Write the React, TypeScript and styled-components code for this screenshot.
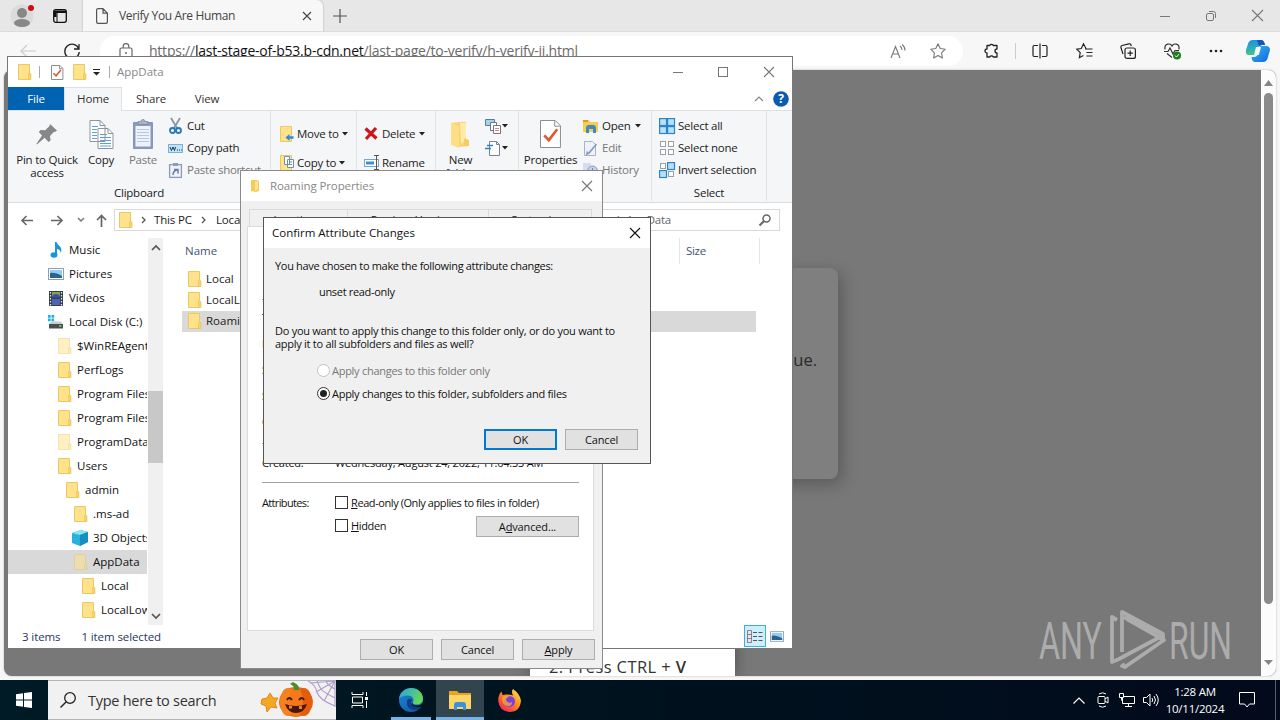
import React from 'react';
import styled, { createGlobalStyle, css } from 'styled-components';

const GlobalStyle = createGlobalStyle`
    * {
        box-sizing: border-box;
    }

    body {
        margin: 0;
        overflow: hidden;
        font-family: 'Open Sans', 'Noto Sans', sans-serif;
        font-size: 11.5px;
        color: #1a1a1a;
    }
`;

/* ---------- shared ---------- */

const Desktop = styled.div`
    position: relative;
    display: flex;
    flex-direction: column;
    width: 1280px;
    height: 720px;
    overflow: hidden;
    background: #f7f7f7;
`;

const Text = styled.span<{ $size?: number; $spacing?: number; $color?: string }>`
    flex: none;
    white-space: pre;
    line-height: 16px;
    font-size: ${({ $size }) => $size ?? 11.5}px;
    letter-spacing: ${({ $spacing }) => ($spacing === undefined ? 'inherit' : `${$spacing}px`)};
    color: ${({ $color }) => $color ?? 'inherit'};
`;

const Slot = styled.div<{ $width: number }>`
    flex: none;
    display: flex;
    align-items: center;
    justify-content: center;
    width: ${({ $width }) => $width}px;
    height: 100%;
`;

const Spacer = styled.div`
    flex: 1;
`;

const Svg = styled.svg`
    flex: none;
    display: block;
    fill: none;
    overflow: visible;
`;

type IconProps = { w: number; h: number; children: React.ReactNode };

const Icon: React.FC<IconProps> = ({ w, h, children }) => (
    <Svg width={w} height={h} viewBox={`0 0 ${w} ${h}`}>
        {children}
    </Svg>
);

const CloseIcon: React.FC<{ size?: number; color?: string }> = ({ size = 10, color = '#777' }) => (
    <Icon w={size} h={size}>
        <path d={`M0 0L${size} ${size}M${size} 0L0 ${size}`} stroke={color} strokeWidth="1.1" />
    </Icon>
);

const FolderIcon: React.FC<{ faded?: boolean }> = ({ faded }) => (
    <Icon w={13} h={16}>
        <g opacity={faded ? 0.5 : 1}>
            <path d="M.5.5h11v15H.5z" fill="#ffe28a" stroke="#e8c867" />
            <path d="M10.500 10l1-1.500L13 10v5.500h-2.500z" fill="#f8d56c" stroke="#e8c35a" strokeWidth=".7" />
        </g>
    </Icon>
);

const CaretDown = () => (
    <Icon w={6} h={4}>
        <path d="M0 0h6L3 3.500z" fill="#222" />
    </Icon>
);

/* ---------- browser ---------- */

const TabStrip = styled.div`
    flex: none;
    display: flex;
    align-items: center;
    height: 32px;
    background: #e7e7e7;
    border-bottom: 1px solid #dcdcdc;
`;

const BrowserTab = styled.div`
    display: flex;
    align-items: center;
    width: 240px;
    height: 32px;
    padding: 0 12px 0 13px;
    background: #f7f7f7;
    border-radius: 0 6px 0 0;
    box-shadow: 0 0 2px rgba(0, 0, 0, 0.3);
    clip-path: inset(0 -3px 0 -3px);
`;

const TabTitle = styled(Text)`
    flex: 1;
    margin-left: 11px;
    color: #444;
`;

const Toolbar = styled.div`
    flex: none;
    display: flex;
    align-items: center;
    height: 38px;
    background: #f7f7f7;
`;

const AddressPill = styled.div`
    display: flex;
    align-items: center;
    width: 863px;
    height: 30px;
    margin-left: 8px;
    padding-left: 19px;
    border-radius: 15px;
    background: #fff;
`;

const Url = styled(Text)`
    flex: 1;
    margin-left: 16px;
    color: #6b6b6b;

    b {
        font-weight: 400;
        color: #111;
    }
`;

const ToolbarDivider = styled.div`
    width: 1px;
    height: 16px;
    margin: 0 1px 0 1px;
    background: #ccc;
`;

const Page = styled.div`
    flex: none;
    position: relative;
    display: flex;
    width: 1272px;
    height: 606px;
    margin-left: 4px;
    border-radius: 8px;
    overflow: hidden;
    background: #787878;
    box-shadow: 0 0 2px #aaa;
`;

const PageScrollbar = styled.div`
    display: flex;
    flex-direction: column;
    align-items: center;
    justify-content: space-between;
    width: 15px;
    height: 606px;
    margin-left: auto;
    padding: 10px 0;
    background: #fcfcfc;
`;

const PageThumb = styled.div`
    width: 9px;
    height: 511px;
    margin: 7px 0 56px;
    border-radius: 5px;
    background: #8b8b8b;
`;

const VerifyCard = styled.div`
    position: absolute;
    left: 420px;
    top: 198px;
    display: flex;
    justify-content: flex-end;
    width: 414px;
    height: 211px;
    padding: 84px 21px 0;
    border-radius: 8px;
    background: #7f7f7f;
    box-shadow: 4px 5px 16px rgba(0, 0, 0, 0.25);
`;

const StepsPopup = styled.div`
    position: absolute;
    left: 526px;
    bottom: 0;
    display: flex;
    align-items: flex-end;
    width: 205px;
    height: 90px;
    padding: 0 0 1px 19px;
    background: #fff;
    box-shadow: 0 0 14px rgba(0, 0, 0, 0.35);
`;

const Watermark = styled.div`
    position: absolute;
    left: 1034px;
    top: 538px;
`;

const EdgeTabs = () => (
    <TabStrip>
        <Slot $width={44}>
            <Icon w={24} h={24}>
                <circle cx="12" cy="12" r="11.500" fill="#dbdbdb" />
                <circle cx="12" cy="9" r="5" fill="#888" />
                <ellipse cx="12" cy="19" rx="8" ry="4" fill="#888" />
                <circle cx="21" cy="4" r="3" fill="#d40b16" />
            </Icon>
        </Slot>
        <Slot $width={32}>
            <Icon w={14} h={14}>
                <rect x=".7" y=".7" width="12.600" height="12.600" rx="2" stroke="#111" strokeWidth="1.300" />
                <path d="M1 1.500h12v2.500H1zM1 4h2.500v4H1z" fill="#111" />
                <path d="M4 4v9" stroke="#111" />
            </Icon>
        </Slot>
        <Slot $width={7} />
        <BrowserTab>
            <Icon w={12} h={16}>
                <path d="M1.500.6h5.500l4.400 4.600v8.800q0 1.400-1.400 1.400H2q-1.400 0-1.400-1.400V2Q.6.6 2 .6M7 .6v4.600h4.400" stroke="#555" strokeWidth="1.200" />
            </Icon>
            <TabTitle $size={12} $spacing={-0.35}>
                Verify You Are Human
            </TabTitle>
            <CloseIcon size={8} color="#444" />
        </BrowserTab>
        <Slot $width={34}>
            <Icon w={14} h={14}>
                <path d="M7 0v14M0 7h14" stroke="#555" strokeWidth="1.200" />
            </Icon>
        </Slot>
        <Spacer />
        <Slot $width={46}>
            <Icon w={10} h={10}>
                <path d="M0 5.500h10" stroke="#777" />
            </Icon>
        </Slot>
        <Slot $width={46}>
            <Icon w={10} h={10}>
                <rect x=".5" y="2.500" width="7" height="7" rx="1.500" stroke="#777" />
                <path d="M3 .5h4.500q2 0 2 2V7" stroke="#777" />
            </Icon>
        </Slot>
        <Slot $width={46}>
            <CloseIcon size={11} />
        </Slot>
    </TabStrip>
);

const EdgeToolbar = () => (
    <Toolbar>
        <Slot $width={56}>
            <Icon w={16} h={14}>
                <path d="M16 7H1M7 1L1 7l6 6" stroke="#ccc" strokeWidth="1.200" />
            </Icon>
        </Slot>
        <Slot $width={36} style={{ paddingRight: 4 }}>
            <Icon w={16} h={16}>
                <path d="M14.800 6A7.200 7.200 0 1 0 15.200 9M15 1v5h-5" stroke="#222" strokeWidth="1.300" />
            </Icon>
        </Slot>
        <AddressPill>
            <Icon w={14} h={16}>
                <rect x="1" y="5" width="12" height="10" rx="1.500" stroke="#666" strokeWidth="1.200" />
                <path d="M4.200 5V3.500a2.800 2.800 0 0 1 5.600 0V5" stroke="#666" strokeWidth="1.200" />
                <circle cx="7" cy="10" r="1" fill="#666" />
            </Icon>
            <Url $size={14} $spacing={-0.23}>
                https://<b>last-stage-of-b53.b-cdn.net</b>/last-page/to-verify/h-verify-ii.html
            </Url>
            <Slot $width={40}>
                <Icon w={16} h={15}>
                    <path d="M1 14L5.500 2.500 10 14M2.500 10h6M10 2q2 1.500 2 4M12 .5q3 2 3 6" stroke="#777" strokeWidth="1.100" />
                </Icon>
            </Slot>
            <Slot $width={45} style={{ paddingRight: 5 }}>
                <Icon w={16} h={16}>
                    <path d="M8 .8l2.200 4.700 5 .7-3.600 3.600.8 5.200L8 12.500 3.600 15l.8-5.200L.8 6.200l5-.7z" stroke="#777" strokeWidth="1.100" strokeLinejoin="round" />
                </Icon>
            </Slot>
        </AddressPill>
        <Slot $width={51} style={{ paddingLeft: 4 }}>
            <Icon w={16} h={16}>
                <path
                    d="M4 2.500h2.700a2 2 0 0 1 3.600 0H14V6a2 2 0 0 0 0 4v4h-3.700a2 2 0 0 0-3.600 0H4v-4a2 2 0 0 1 0-4z"
                    stroke="#222"
                    strokeWidth="1.300"
                    strokeLinejoin="round"
                />
            </Icon>
        </Slot>
        <ToolbarDivider />
        <Slot $width={45}>
            <Icon w={16} h={16}>
                <path d="M6 2.500H2.200Q1 2.500 1 3.700v8.600q0 1.200 1.200 1.200H6M10 2.500h3.800q1.200 0 1.200 1.200v8.600q0 1.200-1.200 1.200H10M8 .5v15" stroke="#222" strokeWidth="1.200" />
            </Icon>
        </Slot>
        <Slot $width={44}>
            <Icon w={17} h={16}>
                <path d="M10 5.500L7.500.8 5.300 5.500.8 6.200l3.400 3.500-.8 5 4-2.200M9 6h7.500M10.500 9.500h6M10.500 13h6" stroke="#222" strokeWidth="1.200" />
            </Icon>
        </Slot>
        <Slot $width={44}>
            <Icon w={16} h={16}>
                <rect x="5" y="5" width="10.400" height="10.400" rx="2" stroke="#222" strokeWidth="1.200" />
                <path d="M10.200 7.500v5.400M7.500 10.200h5.400M3 11L.9 4.500Q.6 3 2 2.500L9 .8q1.500-.3 1.900 1l.4 1.400" stroke="#222" strokeWidth="1.200" />
            </Icon>
        </Slot>
        <Slot $width={44}>
            <Icon w={17} h={16}>
                <path d="M1 6.500C0 0 6.500 0 8 3c1.500-3 8-3 7 3.500M0 8.500h4l2-3.500 3 6 2-3.500h4M3 10.500l5 4" stroke="#333" strokeWidth="1.200" />
                <circle cx="13" cy="12.500" r="4" fill="#1d7d20" />
                <path d="M11 12.500l1.500 1.500 2.500-2.800" stroke="#fff" />
            </Icon>
        </Slot>
        <Slot $width={44}>
            <Icon w={14} h={4}>
                <circle cx="2" cy="2" r="1.300" fill="#222" />
                <circle cx="7" cy="2" r="1.300" fill="#222" />
                <circle cx="12" cy="2" r="1.300" fill="#222" />
            </Icon>
        </Slot>
        <Slot $width={40}>
            <Icon w={24} h={22}>
                <defs>
                    <linearGradient id="copA" x1="0" y1="0" x2="0" y2="1">
                        <stop offset="0" stopColor="#1d8fe8" />
                        <stop offset="1" stopColor="#3fc58c" />
                    </linearGradient>
                    <linearGradient id="copB" x1="0" y1="0" x2="1" y2="1">
                        <stop offset="0" stopColor="#35b5f4" />
                        <stop offset="1" stopColor="#1467dd" />
                    </linearGradient>
                </defs>
                <path d="M7 0h8q3 0 4 5h-3q-3 0-4 3l-2 7H3q-4 0-3-5l2-6q1-4 5-4z" fill="url(#copA)" />
                <path d="M11 0h4q3 0 4 5h-3q-2 0-3 1.500z" fill="#1656b4" />
                <path d="M17 22H9q-3 0-3.500-5H8q3 0 4-3l2-8h6q4 0 4 4l-2 7q-1 5-5 5z" fill="url(#copB)" />
                <path d="M10 7h5l-2.200 8H8z" fill="#f3fbff" />
            </Icon>
        </Slot>
    </Toolbar>
);

const AnyRunLogo = () => (
    <Icon w={194} h={66}>
        <g opacity=".8">
            <text x="1" y="51" fontFamily="Roboto" fontWeight="400" fontSize="52" fill="#b9b9b9" textLength="63" lengthAdjust="spacingAndGlyphs">
                ANY
            </text>
            <text x="131" y="51" fontFamily="Roboto" fontWeight="400" fontSize="52" fill="#b9b9b9" textLength="63" lengthAdjust="spacingAndGlyphs">
                RUN
            </text>
            <path
                d="M79 12l-5-3v45l7-3 41-22-36-20M84 44V4l41 22v4M87 56l-3 2 3 1 39-27-37-21"
                stroke="#b9b9b9"
                strokeWidth="3.800"
                strokeLinejoin="round"
            />
        </g>
    </Icon>
);

const PageContent = () => (
    <Page>
        <PageScrollbar>
            <Icon w={9} h={6}>
                <path d="M0 6L4.500 0 9 6z" fill="#858585" />
            </Icon>
            <PageThumb />
            <Icon w={9} h={6}>
                <path d="M0 0l4.500 5L9 0z" fill="#858585" />
            </Icon>
        </PageScrollbar>
        <VerifyCard>
            <Text $size={16.500} $color="#2a2a2a">
                Click to continue.
            </Text>
        </VerifyCard>
        <StepsPopup>
            <Text $size={16.500} $spacing={0.4} $color="#333">
                2. Press CTRL + <b style={{ fontWeight: 600 }}>V</b>
            </Text>
        </StepsPopup>
        <Watermark>
            <AnyRunLogo />
        </Watermark>
    </Page>
);

/* ---------- windows ---------- */

const Window = styled.section<{ $x: number; $y: number; $w: number; $h: number; $border: string }>`
    position: absolute;
    left: ${({ $x }) => $x}px;
    top: ${({ $y }) => $y}px;
    display: flex;
    flex-direction: column;
    width: ${({ $w }) => $w}px;
    height: ${({ $h }) => $h}px;
    border: 1px solid ${({ $border }) => $border};
    background: #fff;
    overflow: hidden;
`;

const TitleBar = styled.header`
    flex: none;
    display: flex;
    align-items: center;
    height: 30px;
    background: #fff;
`;

const TitleDivider = styled.div`
    width: 1px;
    height: 12px;
    background: #aaa;
`;

const QuickAccess = styled.div`
    display: flex;
    align-items: center;
    padding-left: 10px;
`;

const RibbonTabs = styled.nav`
    flex: none;
    display: flex;
    height: 24px;
    border-bottom: 1px solid #dfe0e1;
    letter-spacing: -0.15px;
`;

const RibbonTab = styled.div<{ $width: number; $kind?: 'file' | 'active' }>`
    display: flex;
    align-items: center;
    justify-content: center;
    width: ${({ $width }) => $width}px;
    color: #333;

    ${({ $kind }) =>
        $kind === 'file' &&
        css`
            background: #0063b1;
            color: #fff;
        `}

    ${({ $kind }) =>
        $kind === 'active' &&
        css`
            height: 24px;
            background: #f5f6f7;
            border: 1px solid #dfe0e1;
            border-width: 1px 1px 0;
            padding-bottom: 1px;
        `}
`;

const Ribbon = styled.div`
    flex: none;
    display: flex;
    height: 92px;
    background: #f5f6f7;
    border-bottom: 1px solid #dadbdc;
    letter-spacing: -0.24px;
`;

const RibbonGroup = styled.div<{ $width: number }>`
    flex: none;
    display: flex;
    flex-direction: column;
    justify-content: space-between;
    width: ${({ $width }) => $width}px;
    height: 90px;
    padding-top: 4px;
    border-right: 1px solid #e2e3e4;
`;

const GroupBody = styled.div<{ $left?: number }>`
    display: flex;
    padding-left: ${({ $left }) => $left ?? 0}px;
`;

const GroupLabel = styled.div`
    height: 16px;
    text-align: center;
`;

const LargeButton = styled.div<{ $width: number; $disabled?: boolean }>`
    display: flex;
    flex-direction: column;
    align-items: center;
    width: ${({ $width }) => $width}px;
    color: ${({ $disabled }) => ($disabled ? '#777' : '#222')};
`;

const LargeIcon = styled.div`
    display: flex;
    align-items: center;
    justify-content: center;
    height: 38px;
`;

const LargeLabel = styled(Text)`
    line-height: 13px;
    text-align: center;
`;

const SmallColumn = styled.div<{ $left?: number; $top?: number }>`
    display: flex;
    flex-direction: column;
    padding-left: ${({ $left }) => $left ?? 0}px;
    padding-top: ${({ $top }) => $top ?? 0}px;
`;

const SmallButton = styled.div<{ $height?: number; $gap?: number; $disabled?: boolean }>`
    display: flex;
    align-items: center;
    gap: ${({ $gap }) => $gap ?? 4}px;
    height: ${({ $height }) => $height ?? 22}px;
    color: ${({ $disabled }) => ($disabled ? '#777' : '#222')};
`;

const AddressRow = styled.div`
    flex: none;
    display: flex;
    align-items: center;
    height: 35px;
    padding-bottom: 1px;
`;

const AddressBox = styled.div<{ $width: number }>`
    display: flex;
    align-items: center;
    width: ${({ $width }) => $width}px;
    height: 22px;
    border: 1px solid #d9d9d9;
`;

const ExplorerBody = styled.div`
    flex: none;
    display: flex;
    height: 387px;
`;

const NavTree = styled.div`
    flex: none;
    width: 139px;
    height: 387px;
    overflow: hidden;
`;

const NavItem = styled.div<{ $indent: number; $selected?: boolean }>`
    display: flex;
    align-items: center;
    height: 24px;
    padding-left: ${({ $indent }) => $indent}px;
    background: ${({ $selected }) => ($selected ? '#d9d9d9' : 'transparent')};
    color: #111;
`;

const NavIcon = styled.div`
    flex: none;
    display: flex;
    justify-content: center;
    width: 16px;
    margin-right: 5px;
`;

const Scrollbar = styled.div`
    display: flex;
    flex-direction: column;
    align-items: center;
    width: 15px;
    margin-left: 1px;
    padding: 7px 0 6px;
    background: #f0f0f0;
`;

const ScrollThumb = styled.div`
    width: 15px;
    height: 72px;
    margin: 141px 0 auto;
    background: #c8c8c8;
`;

const FileList = styled.div`
    flex: 1;
    padding-left: 19px;
`;

const ListHeader = styled.div`
    display: flex;
    align-items: center;
    height: 26px;
    margin-bottom: 5px;
    color: #44546f;
`;

const HeaderCell = styled.div<{ $width: number; $left: number }>`
    width: ${({ $width }) => $width}px;
    height: 26px;
    padding: 5px 0 0 ${({ $left }) => $left}px;
    border-right: 1px solid #e5e5e5;
`;

const FileRow = styled.div<{ $selected?: boolean }>`
    display: flex;
    align-items: center;
    gap: 5px;
    width: 574px;
    height: 21px;
    padding: 0 0 1px 6px;
    background: ${({ $selected }) => ($selected ? '#d9d9d9' : 'transparent')};
`;

const StatusBar = styled.footer`
    display: flex;
    align-items: center;
    height: 22px;
    padding-left: 14px;
    color: #1f3763;
`;

const StatusText = styled(Text)`
    padding-top: 2px;
    letter-spacing: -0.1px;
`;

const ViewToggle = styled.div`
    display: flex;
    align-items: center;
    justify-content: center;
    width: 22px;
    height: 22px;
    border: 1px solid #3bb0d9;
    background: #cdeefb;
`;

const CheckedDocIcon: React.FC<{ w: number; h: number }> = ({ w, h }) => (
    <Icon w={w} h={h}>
        <path d={`M.5.5h${w * 0.7}l${w * 0.25} ${w * 0.25}V${h - 0.5}H.5z`} fill="#fff" stroke="#8a8f94" />
        <path d={`M${w * 0.7} .5v${w * 0.27}h${w * 0.25}`} stroke="#8a8f94" />
        <path d={`M${w * 0.2} ${h * 0.55}l${w * 0.22} ${h * 0.17}L${w * 0.82} ${h * 0.33}`} stroke="#e2572b" strokeWidth={w > 16 ? 2.6 : 1.6} />
    </Icon>
);

const PictureIcon: React.FC<{ small?: boolean }> = ({ small }) => (
    <Svg width={small ? 14 : 16} height={small ? 11 : 12} viewBox="0 0 16 12">
        <rect x=".5" y=".5" width="15" height="11" fill="#fff" stroke="#8ba0b4" />
        <path d="M2 2h12v8H2z" fill="#8fcdf3" />
        <path d="M2 5q5-1 12 3v2H2z" fill="#2c638e" />
    </Svg>
);

const MusicIcon = () => (
    <Icon w={12} h={16}>
        <ellipse cx="4" cy="13" rx="3.500" ry="2.800" fill="#1a93e0" />
        <path d="M5 13V0h1.500q.5 2.500 3.500 4.500 2.500 3.500.5 6.500.3-3.500-3.500-4v6z" fill="#1a93e0" />
    </Icon>
);

const VideoIcon = () => (
    <Icon w={14} h={15}>
        <path d="M0 0h14v15H0z" fill="#333b4d" />
        <path d="M3 1h8v6H3z" fill="#7fa34c" />
        <path d="M3 8h8v6H3z" fill="#4e62b8" />
        <path d="M3 5q4-4 8 0v2H3z" fill="#3a4f9c" />
        <path d="M1.500 1v14M12.500 1v14" stroke="#eee" strokeWidth="1.200" strokeDasharray="1.500 1.500" />
    </Icon>
);

const DiskIcon = () => (
    <Icon w={16} h={14}>
        <path d="M0 0h2.700v2.700H0zM3.500 0h2.700v2.700H3.500zM0 3.500h2.700v2.700H0zM3.500 3.500h2.700v2.700H3.500z" fill="#19b5e4" />
        <path d="M3 6.500h10l2 3H1z" fill="#c9cccd" />
        <path d="M1 9h14v4.500H1z" fill="#494f50" />
        <path d="M11 11h2.500" stroke="#4ce36a" strokeWidth="1.500" />
    </Icon>
);

const CubeIcon = () => (
    <Icon w={16} h={16}>
        <path d="M0 3l9-3 7 2v10l-8 4-8-3z" fill="#27b4dc" />
        <path d="M0 3l9-3 7 2-8 3z" fill="#8be3f6" />
        <path d="M8 5l8-3v10l-8 4z" fill="#1590bd" />
    </Icon>
);

const PinIcon = () => (
    <Icon w={20} h={22}>
        <path d="M13 1l7 6.500-2 1.500-1-.3-4 4.300.6 4.500-2 1.500-4-4.300L0 21.500l-.5-.8L5 12.500 1.800 9l1.700-2 4.700.3L12.500 3z" fill="#85888b" />
    </Icon>
);

const CopyIcon = () => (
    <Icon w={25} h={29}>
        <path d="M1 .5h10l5 5v16H1zM9 8.500h10l5 5v15H9z" fill="#fff" stroke="#8c959d" />
        <path d="M11 .5v5h5M19 8.500v5h5" stroke="#8c959d" />
        <path d="M3 6.500h6M3 9.500h5M3 12.500h5M3 15.500h5M3 18.500h5M11 14.500h7M11 17.500h11M11 20.500h11M11 23.500h11M11 26h11" stroke="#5b9fe0" />
    </Icon>
);

const PasteIcon = () => (
    <Icon w={20} h={30}>
        <rect x=".7" y="3.700" width="18.600" height="25.600" fill="#8d9fc0" stroke="#7386ad" />
        <path d="M2.500 7h15v20.500h-15z" fill="#eef2fb" />
        <path d="M5 5.500V2.500h3a2 2 0 0 1 4 0h3v3z" fill="#a9b3c6" stroke="#7c88a3" strokeWidth=".8" />
        <path d="M4 10.500h12M4 13.500h12M4 16.500h12M4 19.500h12M4 22.500h12" stroke="#b9c7e6" />
    </Icon>
);

const ScissorsIcon = () => (
    <Icon w={13} h={16}>
        <path d="M2 0l6 10M11 0L5 10" stroke="#8896a2" strokeWidth="1.800" />
        <circle cx="3.500" cy="12.500" r="2.500" stroke="#2078be" strokeWidth="1.800" />
        <circle cx="9.500" cy="12.500" r="2.500" stroke="#2078be" strokeWidth="1.800" />
    </Icon>
);

const PathIcon = () => (
    <Icon w={15} h={9}>
        <rect x=".5" y=".5" width="14" height="8" fill="#bfe2f7" stroke="#79b3da" />
        <path d="M2 3l1.500 3.500L5 3l1.500 3.500L7.500 3M9 6h1M11 6h1M13 6h.8" stroke="#22384c" />
    </Icon>
);

const ShortcutIcon = () => (
    <Icon w={13} h={15}>
        <rect x=".6" y="1.600" width="11.800" height="12.800" fill="#eef2fa" stroke="#8c9bb8" strokeWidth="1.300" />
        <path d="M4 0h5v3H4z" fill="#8c9bb8" />
        <path d="M4 12q0-4 4-5M5 6.500h4v4" stroke="#6478a3" strokeWidth="1.400" />
    </Icon>
);

const MoveIcon: React.FC<{ copy?: boolean }> = ({ copy }) => (
    <Icon w={14} h={16}>
        <path d="M.5.5h11v15H.5z" fill="#ffe28a" stroke="#e8c867" />
        {copy ? (
            <path d="M4.500 1.500h5v8h-5zM7.500 4.500h6v8h-6zM9 7h3M9 9.500h3" fill="#fff" stroke="#6c8fb8" />
        ) : (
            <path d="M5.500 11.500L9.500 8v2.200h4v2.600h-4V15z" fill="#2b8de0" />
        )}
    </Icon>
);

const DeleteIcon = () => (
    <Icon w={14} h={13}>
        <path d="M1.500 1.500l11 10M12 1L2 12" stroke="#d0141c" strokeWidth="3.200" />
    </Icon>
);

const RenameIcon = () => (
    <Icon w={16} h={15}>
        <rect x=".5" y="4.500" width="14" height="7" fill="#fff" stroke="#7fa3c4" />
        <path d="M2 6.500h8v3H2z" fill="#3290dd" />
        <path d="M10 .5h5M12.500.5v14M10 14.500h5" stroke="#555" />
    </Icon>
);

const NewFolderIcon = () => (
    <Icon w={20} h={27}>
        <path d="M0 2l9-1h6v17l3 1v6l-10 1-8-3z" fill="#f7d374" />
        <path d="M9 2h6v17l-5 4z" fill="#ffeaa8" />
        <path d="M13 17l2 1 3 1v6h-5z" fill="#f6cd62" />
        <path d="M0 2l8 3v22L0 24z" fill="#ffdf86" />
    </Icon>
);

const NewItemIcon = () => (
    <Icon w={16} h={16}>
        <path d="M.5 1.500h9v6h-9z" fill="#9fd4f5" stroke="#65798b" />
        <path d="M5.500 4.500h6v8h-6z" fill="#fff" stroke="#65798b" />
        <path d="M8.500 7.500h7v8h-7z" fill="#fff" stroke="#8d6f6f" />
        <path d="M10 10.500h4M10 12.500h4" stroke="#bf9090" />
    </Icon>
);

const EasyAccessIcon = () => (
    <Icon w={15} h={15}>
        <path d="M4.500.5h7l3 3v11h-10z" fill="#fff" stroke="#788490" />
        <path d="M11.500.5v3h3" stroke="#788490" />
        <path d="M2 4.500h6M0 7.500h6" stroke="#2a85d0" strokeWidth="1.500" />
    </Icon>
);

const OpenIcon = () => (
    <Icon w={15} h={14}>
        <path d="M0 1h6l1 2h8v10H0z" fill="#f6cc52" />
        <path d="M0 1h5v2H0z" fill="#d99d1d" />
        <path d="M3 14V9q0-3 3-3h4q3 0 3 3v5h-3v-4H6v4z" fill="#4489bd" />
    </Icon>
);

const EditIcon = () => (
    <Icon w={13} h={15}>
        <path d="M.5.5h8l3 3v11H.5z" fill="#eef2fa" stroke="#a6b3ca" />
        <path d="M12.500 3L5 12l-2 1 .5-2.500" stroke="#8b9bc0" strokeWidth="1.700" />
    </Icon>
);

const HistoryIcon = () => (
    <Icon w={15} h={14}>
        <path d="M0 0h8v10H0z" fill="#d5dced" />
        <circle cx="9.500" cy="8" r="5" fill="#c5cfe6" stroke="#8f9fc2" />
        <path d="M9.500 5v3h3" stroke="#7186b3" />
    </Icon>
);

type SelectKind = 'all' | 'none' | 'invert';

const SelectIcon: React.FC<{ kind: SelectKind }> = ({ kind }) => {
    const cells = [
        { x: 0, y: 0, on: kind === 'all' },
        { x: 8, y: 0, on: kind !== 'none' },
        { x: 0, y: 8, on: kind !== 'none' },
        { x: 8, y: 8, on: kind === 'all' },
    ];
    return (
        <Icon w={16} h={16}>
            {cells.map(({ x, y, on }) => (
                <rect
                    key={`${x}${y}`}
                    x={x + (on ? 0.6 : 1.5)}
                    y={y + (on ? 0.6 : 1.5)}
                    width={on ? 6.9 : 5}
                    height={on ? 6.9 : 5}
                    fill={on ? '#b8e0fb' : '#fff'}
                    stroke={on ? '#2a86c8' : '#9aa0a5'}
                    strokeWidth={on ? 1.2 : 1}
                />
            ))}
        </Icon>
    );
};

const navItems = [
    { label: 'Music', indent: 40, icon: <MusicIcon /> },
    { label: 'Pictures', indent: 40, icon: <PictureIcon /> },
    { label: 'Videos', indent: 40, icon: <VideoIcon /> },
    { label: 'Local Disk (C:)', indent: 40, icon: <DiskIcon /> },
    { label: '$WinREAgent', indent: 48, icon: <FolderIcon faded /> },
    { label: 'PerfLogs', indent: 48, icon: <FolderIcon /> },
    { label: 'Program Files', indent: 48, icon: <FolderIcon /> },
    { label: 'Program Files (x86)', indent: 48, icon: <FolderIcon /> },
    { label: 'ProgramData', indent: 48, icon: <FolderIcon faded /> },
    { label: 'Users', indent: 48, icon: <FolderIcon /> },
    { label: 'admin', indent: 56, icon: <FolderIcon /> },
    { label: '.ms-ad', indent: 64, icon: <FolderIcon /> },
    { label: '3D Objects', indent: 64, icon: <CubeIcon /> },
    { label: 'AppData', indent: 64, icon: <FolderIcon faded />, selected: true },
    { label: 'Local', indent: 72, icon: <FolderIcon /> },
    { label: 'LocalLow', indent: 72, icon: <FolderIcon /> },
];

const Explorer = () => (
    <Window $x={7} $y={56} $w={786} $h={593} $border="#777">
        <TitleBar>
            <QuickAccess>
                <FolderIcon />
                <TitleDivider style={{ margin: '0 11px 0 8px' }} />
                <CheckedDocIcon w={12} h={15} />
                <Slot $width={10} />
                <FolderIcon />
                <Slot $width={21}>
                    <Icon w={7} h={7}>
                        <path d="M0 .5h7" stroke="#222" />
                        <path d="M0 3h7L3.500 6.500z" fill="#222" />
                    </Icon>
                </Slot>
                <TitleDivider style={{ margin: '0 7px 0 2px' }} />
                <Text $color="#888">AppData</Text>
            </QuickAccess>
            <Spacer />
            <Slot $width={45}>
                <Icon w={10} h={10}>
                    <path d="M0 5.500h10" stroke="#777" />
                </Icon>
            </Slot>
            <Slot $width={45}>
                <Icon w={10} h={10}>
                    <rect x=".5" y=".5" width="9" height="9" stroke="#777" />
                </Icon>
            </Slot>
            <Slot $width={47}>
                <CloseIcon />
            </Slot>
        </TitleBar>
        <RibbonTabs>
            <RibbonTab $width={56} $kind="file">
                <Text>File</Text>
            </RibbonTab>
            <RibbonTab $width={58} $kind="active">
                <Text>Home</Text>
            </RibbonTab>
            <RibbonTab $width={58}>
                <Text>Share</Text>
            </RibbonTab>
            <RibbonTab $width={54}>
                <Text>View</Text>
            </RibbonTab>
            <Spacer />
            <Slot $width={22}>
                <Icon w={8} h={5}>
                    <path d="M0 5l4-4 4 4" stroke="#888" strokeWidth="1.200" />
                </Icon>
            </Slot>
            <Slot $width={22}>
                <Icon w={16} h={16}>
                    <circle cx="8" cy="8" r="7.800" fill="#0b5cae" />
                    <text x="8" y="12" textAnchor="middle" fontFamily="Open Sans" fontWeight="700" fontSize="12" fill="#fff">
                        ?
                    </text>
                </Icon>
            </Slot>
        </RibbonTabs>
        <Ribbon>
            <RibbonGroup $width={263}>
                <GroupBody $left={6}>
                    <LargeButton $width={66}>
                        <LargeIcon>
                            <PinIcon />
                        </LargeIcon>
                        <LargeLabel>{'Pin to Quick\naccess'}</LargeLabel>
                    </LargeButton>
                    <LargeButton $width={42}>
                        <LargeIcon>
                            <CopyIcon />
                        </LargeIcon>
                        <LargeLabel>Copy</LargeLabel>
                    </LargeButton>
                    <LargeButton $width={42} $disabled>
                        <LargeIcon>
                            <PasteIcon />
                        </LargeIcon>
                        <LargeLabel>Paste</LargeLabel>
                    </LargeButton>
                    <SmallColumn $left={4}>
                        <SmallButton>
                            <Slot $width={15}>
                                <ScissorsIcon />
                            </Slot>
                            <Text>Cut</Text>
                        </SmallButton>
                        <SmallButton>
                            <PathIcon />
                            <Text>Copy path</Text>
                        </SmallButton>
                        <SmallButton $disabled>
                            <Slot $width={15}>
                                <ShortcutIcon />
                            </Slot>
                            <Text>Paste shortcut</Text>
                        </SmallButton>
                    </SmallColumn>
                </GroupBody>
                <GroupLabel>
                    <Text>Clipboard</Text>
                </GroupLabel>
            </RibbonGroup>
            <RibbonGroup $width={86}>
                <SmallColumn $left={9} $top={4}>
                    <SmallButton $height={29} $gap={3}>
                        <MoveIcon />
                        <Text>Move to</Text>
                        <CaretDown />
                    </SmallButton>
                    <SmallButton $height={29} $gap={3}>
                        <MoveIcon copy />
                        <Text>Copy to</Text>
                        <CaretDown />
                    </SmallButton>
                </SmallColumn>
            </RibbonGroup>
            <RibbonGroup $width={79}>
                <SmallColumn $left={7} $top={4}>
                    <SmallButton $height={29}>
                        <DeleteIcon />
                        <Text>Delete</Text>
                        <CaretDown />
                    </SmallButton>
                    <SmallButton $height={29} $gap={2}>
                        <RenameIcon />
                        <Text>Rename</Text>
                    </SmallButton>
                </SmallColumn>
            </RibbonGroup>
            <RibbonGroup $width={83}>
                <GroupBody>
                    <LargeButton $width={49}>
                        <LargeIcon>
                            <NewFolderIcon />
                        </LargeIcon>
                        <LargeLabel>{'New\nfolder'}</LargeLabel>
                    </LargeButton>
                    <SmallColumn>
                        <SmallButton $gap={1}>
                            <NewItemIcon />
                            <CaretDown />
                        </SmallButton>
                        <SmallButton $gap={2}>
                            <EasyAccessIcon />
                            <CaretDown />
                        </SmallButton>
                    </SmallColumn>
                </GroupBody>
            </RibbonGroup>
            <RibbonGroup $width={133}>
                <GroupBody>
                    <LargeButton $width={63}>
                        <LargeIcon>
                            <CheckedDocIcon w={21} h={28} />
                        </LargeIcon>
                        <LargeLabel>Properties</LargeLabel>
                    </LargeButton>
                    <SmallColumn $left={1}>
                        <SmallButton>
                            <OpenIcon />
                            <Text>Open</Text>
                            <CaretDown />
                        </SmallButton>
                        <SmallButton $disabled>
                            <Slot $width={15}>
                                <EditIcon />
                            </Slot>
                            <Text>Edit</Text>
                        </SmallButton>
                        <SmallButton $disabled>
                            <HistoryIcon />
                            <Text>History</Text>
                        </SmallButton>
                    </SmallColumn>
                </GroupBody>
            </RibbonGroup>
            <RibbonGroup $width={115}>
                <SmallColumn $left={7}>
                    <SmallButton $gap={3}>
                        <SelectIcon kind="all" />
                        <Text>Select all</Text>
                    </SmallButton>
                    <SmallButton $gap={3}>
                        <SelectIcon kind="none" />
                        <Text>Select none</Text>
                    </SmallButton>
                    <SmallButton $gap={3}>
                        <SelectIcon kind="invert" />
                        <Text>Invert selection</Text>
                    </SmallButton>
                </SmallColumn>
                <GroupLabel>
                    <Text>Select</Text>
                </GroupLabel>
            </RibbonGroup>
        </Ribbon>
        <AddressRow>
            <Slot $width={38}>
                <Icon w={12} h={11}>
                    <path d="M12 5.500H1M5.500 1L1 5.500 5.500 10" stroke="#666" strokeWidth="1.600" />
                </Icon>
            </Slot>
            <Slot $width={21}>
                <Icon w={12} h={11}>
                    <path d="M0 5.500h11M6.500 1L11 5.500 6.500 10" stroke="#666" strokeWidth="1.600" />
                </Icon>
            </Slot>
            <Slot $width={27}>
                <Icon w={6} h={4}>
                    <path d="M0 0l3 3 3-3" stroke="#777" strokeWidth="1.500" />
                </Icon>
            </Slot>
            <Slot $width={14}>
                <Icon w={11} h={13}>
                    <path d="M5.500 13V1M1 6l4.500-4.500L10 6" stroke="#666" strokeWidth="1.700" />
                </Icon>
            </Slot>
            <Slot $width={6} />
            <AddressBox $width={470}>
                <Slot $width={21}>
                    <FolderIcon />
                </Slot>
                <Slot $width={15}>
                    <Icon w={4} h={6}>
                        <path d="M0 0l3 3-3 3" stroke="#555" strokeWidth="1.300" />
                    </Icon>
                </Slot>
                <Text $spacing={-0.15} style={{ marginLeft: 3 }}>
                    This PC
                </Text>
                <Slot $width={24}>
                    <Icon w={4} h={6}>
                        <path d="M0 0l3 3-3 3" stroke="#555" strokeWidth="1.300" />
                    </Icon>
                </Slot>
                <Text $spacing={-0.1}>Local Disk (C:)</Text>
            </AddressBox>
            <AddressBox $width={193} style={{ marginLeft: 3, paddingLeft: 1 }}>
                <Text $color="#666" $spacing={-0.3}>
                    Search AppData
                </Text>
                <Spacer />
                <Slot $width={29}>
                    <Icon w={12} h={12}>
                        <circle cx="7.500" cy="4.500" r="3.500" stroke="#666" strokeWidth="1.500" />
                        <path d="M5 7l-4.500 4.500" stroke="#666" strokeWidth="2" />
                    </Icon>
                </Slot>
            </AddressBox>
        </AddressRow>
        <ExplorerBody>
            <NavTree>
                {navItems.map(({ label, indent, icon, selected }) => (
                    <NavItem key={label} $indent={indent} $selected={selected}>
                        <NavIcon>{icon}</NavIcon>
                        <Text>{label}</Text>
                    </NavItem>
                ))}
            </NavTree>
            <Scrollbar>
                <Icon w={8} h={5}>
                    <path d="M0 5l4-4 4 4" stroke="#555" strokeWidth="1.700" />
                </Icon>
                <ScrollThumb />
                <Icon w={8} h={5}>
                    <path d="M0 0l4 4 4-4" stroke="#555" strokeWidth="1.700" />
                </Icon>
            </Scrollbar>
            <FileList>
                <ListHeader>
                    <HeaderCell $width={498} $left={3}>
                        <Text>Name</Text>
                    </HeaderCell>
                    <HeaderCell $width={80} $left={6}>
                        <Text $spacing={-0.3}>Size</Text>
                    </HeaderCell>
                </ListHeader>
                {['Local', 'LocalLow', 'Roaming'].map((name) => (
                    <FileRow key={name} $selected={name === 'Roaming'}>
                        <FolderIcon />
                        <Text>{name}</Text>
                    </FileRow>
                ))}
            </FileList>
        </ExplorerBody>
        <StatusBar>
            <StatusText>3 items</StatusText>
            <Slot $width={21} />
            <StatusText>1 item selected</StatusText>
            <Spacer />
            <ViewToggle>
                <Icon w={16} h={13}>
                    <path d="M.5.500h4v12h-4zM.5 4.500h4M.5 8.500h4" stroke="#956" strokeWidth=".8" />
                    <path d="M6 2.500h4M11.500 2.500h4M6 6.500h4M11.500 6.500h4M6 10.500h4M11.500 10.500h4" stroke="#555" />
                </Icon>
            </ViewToggle>
            <Slot $width={26} style={{ paddingRight: 4 }}>
                <PictureIcon small />
            </Slot>
        </StatusBar>
    </Window>
);

/* ---------- property sheet ---------- */

const SheetBody = styled.div`
    flex: 1;
    display: flex;
    flex-direction: column;
    padding: 8px 7px 8px 6px;
    background: #f0f0f0;
    letter-spacing: -0.25px;
`;

const SheetTabs = styled.div`
    display: flex;
    height: 17px;
    margin-left: 2px;
`;

const SheetTab = styled.div<{ $width: number }>`
    display: flex;
    justify-content: center;
    width: ${({ $width }) => $width}px;
    height: 17px;
    padding: 2px 8px 0 0;
    overflow: hidden;
    border: 1px solid #d9d9d9;
    border-bottom: 0;
    margin-right: -1px;
`;

const SheetPage = styled.div`
    flex: none;
    display: flex;
    flex-direction: column;
    width: 347px;
    height: 405px;
    padding: 0 14px;
    border: 1px solid #dcdcdc;
    background: #fff;
    color: #111;
`;

const FieldRow = styled.div<{ $height: number }>`
    display: flex;
    align-items: center;
    height: ${({ $height }) => $height}px;
`;

const FieldLabel = styled.div`
    width: 73px;
`;

const Rule = styled.hr<{ $top?: number; $bottom?: number }>`
    width: 317px;
    height: 1px;
    margin: ${({ $top }) => $top ?? 0}px 0 ${({ $bottom }) => $bottom ?? 0}px;
    border: 0;
    background: #a0a0a0;
`;

const Checkbox = styled.div`
    width: 13px;
    height: 13px;
    margin-right: 3px;
    border: 1px solid #333;
    background: #fff;
`;

const PushButton = styled.button<{ $width?: number; $default?: boolean }>`
    display: flex;
    align-items: center;
    justify-content: center;
    width: ${({ $width }) => $width ?? 73}px;
    height: 21px;
    padding: 0;
    border: ${({ $default }) => ($default ? '2px solid #0078d7' : '1px solid #adadad')};
    border-radius: 0;
    background: #e1e1e1;
    color: #111;
    font-family: inherit;
    letter-spacing: -0.15px;
`;

const ButtonRow = styled.div`
    display: flex;
    justify-content: flex-end;
    gap: 8px;
`;

const details: [string, string][] = [
    ['Location:', 'C:\\Users\\admin\\AppData'],
    ['Size:', '4.92 MB'],
    ['Size on disk:', '5.43 MB'],
    ['Contains:', '112 Files, 84 Folders'],
];

const PropertySheet = () => (
    <Window $x={240} $y={170} $w={363} $h={499} $border="#8a8a8a">
        <TitleBar>
            <Slot $width={29}>
                <Icon w={9} h={12}>
                    <path d="M0 0h6l2 1v10l-3 1-5-1z" fill="#f6cc58" />
                    <path d="M4 1h3v8l-3 2z" fill="#ffe396" />
                </Icon>
            </Slot>
            <Text $color="#888" $spacing={-0.1}>
                Roaming Properties
            </Text>
            <Spacer />
            <Slot $width={30}>
                <CloseIcon />
            </Slot>
        </TitleBar>
        <SheetBody>
            <SheetTabs>
                <SheetTab $width={99}>
                    <Text $size={11}>Location</Text>
                </SheetTab>
                <SheetTab $width={142}>
                    <Text $size={11}>Previous Versions</Text>
                </SheetTab>
                <SheetTab $width={104}>
                    <Text $size={11}>Customize</Text>
                </SheetTab>
            </SheetTabs>
            <SheetPage>
                <Rule $top={72} $bottom={4} />
                <FieldRow $height={27}>
                    <FieldLabel>
                        <Text $size={11}>Type:</Text>
                    </FieldLabel>
                    <Text $size={11}>File folder</Text>
                </FieldRow>
                {details.map(([label, value]) => (
                    <FieldRow key={label} $height={26}>
                        <FieldLabel>
                            <Text $size={11}>{label}</Text>
                        </FieldLabel>
                        <Text $size={11}>{value}</Text>
                    </FieldRow>
                ))}
                <Rule $top={8} $bottom={6} />
                <FieldRow $height={26}>
                    <FieldLabel>
                        <Text $size={11}>Created:</Text>
                    </FieldLabel>
                    <Text $size={11} $spacing={-0.2}>
                        Wednesday, August 24, 2022, 11:04:33 AM
                    </Text>
                </FieldRow>
                <Rule $top={6} $bottom={8} />
                <FieldRow $height={23}>
                    <FieldLabel>
                        <Text $size={11} $spacing={-0.65}>
                            Attributes:
                        </Text>
                    </FieldLabel>
                    <Checkbox />
                    <Text $size={11} $spacing={-0.42}>
                        <u>R</u>ead-only (Only applies to files in folder)
                    </Text>
                </FieldRow>
                <FieldRow $height={25}>
                    <FieldLabel />
                    <Checkbox style={{ marginBottom: 2 }} />
                    <Text $size={11} $spacing={-0.35} style={{ paddingBottom: 2 }}>
                        <u>H</u>idden
                    </Text>
                    <Spacer />
                    <PushButton $width={103}>
                        <Text $size={11}>
                            A<u>d</u>vanced...
                        </Text>
                    </PushButton>
                </FieldRow>
            </SheetPage>
            <Spacer />
            <ButtonRow>
                <PushButton>
                    <Text $size={11}>OK</Text>
                </PushButton>
                <PushButton>
                    <Text $size={11}>Cancel</Text>
                </PushButton>
                <PushButton>
                    <Text $size={11}>
                        <u>A</u>pply
                    </Text>
                </PushButton>
            </ButtonRow>
        </SheetBody>
    </Window>
);

/* ---------- confirm dialog ---------- */

const DialogBody = styled.div`
    flex: 1;
    display: flex;
    flex-direction: column;
    padding: 10px 12px 13px 11px;
    background: #f0f0f0;
    color: #111;
    letter-spacing: -0.27px;
`;

const Question = styled(Text)`
    margin: 24px 0 9px;
    line-height: 13px;
`;

const RadioRow = styled.label<{ $disabled?: boolean }>`
    display: flex;
    align-items: center;
    gap: 2px;
    height: 23px;
    padding-left: 42px;
    color: ${({ $disabled }) => ($disabled ? '#777' : '#111')};
`;

const RadioDot = styled.div<{ $checked?: boolean }>`
    display: flex;
    align-items: center;
    justify-content: center;
    width: 13px;
    height: 13px;
    border: 1px solid ${({ $checked }) => ($checked ? '#333' : '#c4c4c4')};
    border-radius: 50%;
    background: #fff;

    &::after {
        content: '';
        width: 7px;
        height: 7px;
        border-radius: 50%;
        background: ${({ $checked }) => ($checked ? '#222' : 'transparent')};
    }
`;

const ConfirmDialog = () => (
    <Window $x={263} $y={217} $w={388} $h={247} $border="#555">
        <TitleBar>
            <Text style={{ marginLeft: 8 }} $color="#111">
                Confirm Attribute Changes
            </Text>
            <Spacer />
            <Slot $width={30}>
                <CloseIcon color="#111" />
            </Slot>
        </TitleBar>
        <DialogBody>
            <Text $size={11} $spacing={-0.32}>
                You have chosen to make the following attribute changes:
            </Text>
            <Text $size={11} $spacing={-0.32} style={{ margin: '10px 0 0 44px' }}>
                unset read-only
            </Text>
            <Question $size={11}>
                {'Do you want to apply this change to this folder only, or do you want to\napply it to all subfolders and files as well?'}
            </Question>
            <RadioRow $disabled>
                <RadioDot />
                <Text $size={11}>Apply changes to this folder only</Text>
            </RadioRow>
            <RadioRow>
                <RadioDot $checked />
                <Text $size={11}>Apply changes to this folder, subfolders and files</Text>
            </RadioRow>
            <Spacer />
            <ButtonRow>
                <PushButton $default>
                    <Text $size={11}>OK</Text>
                </PushButton>
                <PushButton>
                    <Text $size={11}>Cancel</Text>
                </PushButton>
            </ButtonRow>
        </DialogBody>
    </Window>
);

/* ---------- taskbar ---------- */

const Taskbar = styled.div`
    flex: none;
    display: flex;
    align-items: center;
    height: 40px;
    margin-top: auto;
    background: linear-gradient(90deg, #001b25, #00121e 50%, #020a1b);
    color: #fff;
`;

const SearchBox = styled.div`
    display: flex;
    align-items: center;
    width: 288px;
    height: 40px;
    padding-left: 12px;
    border: 1px solid #b5b5b5;
    border-width: 1px 0;
    background: #f1f1f1;
    color: #333;
`;

const TaskButton = styled.div<{ $width?: number; $active?: boolean }>`
    display: flex;
    align-items: center;
    justify-content: center;
    width: ${({ $width }) => $width ?? 48}px;
    height: 40px;
    background: ${({ $active }) => ($active ? '#32444d' : 'transparent')};
`;

const RunningMark = styled.div<{ $wide?: boolean }>`
    align-self: flex-end;
    width: ${({ $wide }) => ($wide ? 48 : 40)}px;
    height: 3px;
    margin-left: ${({ $wide }) => ($wide ? -48 : -45)}px;
    margin-right: ${({ $wide }) => ($wide ? 0 : 5)}px;
    background: #76b3e8;
`;

const Clock = styled.div`
    display: flex;
    flex-direction: column;
    align-items: center;
    width: 64px;
    gap: 1px;
    letter-spacing: -0.25px;
`;

const Halloween = () => (
    <Icon w={76} h={38}>
        <path d="M2 18l5-1 3-5 3 5 5 0-3 5 2 5-6-1-4 5-1-6-5-2z" fill="#f5a623" stroke="#e8851a" />
        <ellipse cx="36" cy="21" rx="17" ry="15" fill="#ec6a10" />
        <ellipse cx="28" cy="21" rx="8" ry="14" fill="#f58220" />
        <ellipse cx="44" cy="21" rx="8" ry="14" fill="#e35d0c" />
        <ellipse cx="36" cy="21" rx="7" ry="15" fill="#f4791a" />
        <path d="M34 9q1-4-4-6l3-2q7 3 6 8z" fill="#4c8a2c" />
        <path d="M27 19q2-4 5 0M39 19q3-4 5 0" stroke="#4a1606" strokeWidth="2" />
        <path d="M25 23q11 4 22 0-3 9-11 9t-11-9z" fill="#4a1606" />
        <path d="M29 24.500v3h3v-2.500M39 25v3h3v-3" fill="#f58220" />
        <path d="M48 0q7 3 9 11t18 14M57 0q2 5 4 8t14 9M66 0q1 4 9 8M75 0L50 2M75 0L56 11M75 0L64 20M75 0v26" stroke="#ad9bc9" strokeWidth="1.100" />
    </Icon>
);

const DesktopTaskbar = () => (
    <Taskbar>
        <TaskButton>
            <Icon w={16} h={16}>
                <path d="M0 2.200L7 1.200V7.500H0zM8 1.100L16 0v7.500H8zM0 8.500h7v6.300l-7-1zM8 8.500h8V16l-8-1.100z" fill="#fff" />
            </Icon>
        </TaskButton>
        <SearchBox>
            <Icon w={16} h={16}>
                <circle cx="10" cy="6" r="5.300" stroke="#222" strokeWidth="1.300" />
                <path d="M6 10l-5.500 5.500" stroke="#222" strokeWidth="1.400" />
            </Icon>
            <Text $size={14.500} $spacing={-0.27} style={{ marginLeft: 12, paddingTop: 2 }}>
                Type here to search
            </Text>
            <Spacer />
            <Halloween />
        </SearchBox>
        <TaskButton>
            <Icon w={18} h={16}>
                <path d="M1 0v2.500h11V0M1.500 5h10v6h-10zM1 16v-2.500h11V16M15.500 0v4M15.500 9v7" stroke="#fff" />
                <path d="M14 5h3v3h-3z" fill="#fff" />
            </Icon>
        </TaskButton>
        <TaskButton $width={52} style={{ paddingLeft: 2 }}>
            <Icon w={24} h={24}>
                <defs>
                    <linearGradient id="edgeTop" x1="0" y1="0" x2="1" y2=".4">
                        <stop offset="0" stopColor="#24a5e8" />
                        <stop offset="1" stopColor="#63d65a" />
                    </linearGradient>
                    <linearGradient id="edgeBottom" x1="0" y1="0" x2="1" y2="1">
                        <stop offset="0" stopColor="#1c8ad8" />
                        <stop offset="1" stopColor="#1150a4" />
                    </linearGradient>
                </defs>
                <circle cx="12" cy="12" r="12" fill="url(#edgeBottom)" />
                <path d="M0 11C1 3.500 7 0 12 0c7 0 12 5 12 10.500 0 4-3 6-6 6-3.500 0-4.500-1.500-4-2.500C16 11 13 7.500 9 7.500 5 7.500 1 9 0 11z" fill="url(#edgeTop)" />
                <path d="M8 13q-1 8 7 9 5 0 8-4-10 3-11-4 2-2 0-3-3-1-4 2z" fill="#0d3f82" />
                <path d="M13.800 14.500q-1.500 3 4.200 3 4 0 5.500-2.500l1 1.500-1.500 2q-4 1.500-8 0-3.500-1.500-1.200-4z" fill="#00141f" />
            </Icon>
        </TaskButton>
        <RunningMark />
        <TaskButton $active>
            <Icon w={22} h={19}>
                <path d="M0 0h8l2 2h12v5H0z" fill="#e5a520" />
                <path d="M0 4h22v14H0z" fill="#fcd667" />
                <path d="M5 19v-5q0-3 3-3h6q3 0 3 3v5h-3v-3H8v3z" fill="#3c91dc" />
            </Icon>
        </TaskButton>
        <RunningMark $wide />
        <TaskButton $width={50}>
            <Icon w={23} h={23}>
                <defs>
                    <linearGradient id="fox" x1="1" y1="0" x2=".2" y2="1">
                        <stop offset="0" stopColor="#fff04a" />
                        <stop offset=".5" stopColor="#ff8a1f" />
                        <stop offset="1" stopColor="#f0205e" />
                    </linearGradient>
                </defs>
                <path d="M15 0q7 5 8 11.500Q22 23 11.500 23 1 22 .3 12 0 6 3.500 2.500L4.500 6 8 5.500q3-.5 7 1-2-4 0-6.500z" fill="url(#fox)" />
                <circle cx="11.500" cy="12.500" r="5.500" fill="#7b3fe0" />
                <path d="M4 8q4-2 8 0-4 0-4 3 2 4 6 2 0 5-5 4-5-1-5-9z" fill="#ffae2b" opacity=".75" />
            </Icon>
        </TaskButton>
        <Spacer />
        <Slot $width={24}>
            <Icon w={12} h={7}>
                <path d="M.5 6.500L6 1l5.500 5.500" stroke="#fff" strokeWidth="1.200" />
            </Icon>
        </Slot>
        <Slot $width={24}>
            <Icon w={12} h={16}>
                <rect x="1" y="4.500" width="7" height="7" rx="1" stroke="#fff" />
                <path d="M8 7l3-2v6L8 9M2 2q3.500-2.500 7 0M2 14q3.500 2.500 7 0" stroke="#fff" />
            </Icon>
        </Slot>
        <Slot $width={24}>
            <Icon w={16} h={14}>
                <path d="M5 3.500h10.500v7H3.500V5M9.500 10.500v3M6 13.500h7M.5.500h4v4h-4zM2.500 4.500v3" stroke="#fff" />
            </Icon>
        </Slot>
        <Slot $width={24}>
            <Icon w={16} h={14}>
                <path d="M.5 4.500h3L7 1v12L3.500 9.500h-3zM9 5q1.500 2 0 4M11 3q3 4 0 8M13 1q4.500 6 0 12" stroke="#fff" />
            </Icon>
        </Slot>
        <Clock>
            <Text>1:28 AM</Text>
            <Text>10/11/2024</Text>
        </Clock>
        <Slot $width={40}>
            <Icon w={16} h={16}>
                <path d="M.5.500h15v11.500h-5L8 15l-2.500-3h-5z" stroke="#fff" />
            </Icon>
        </Slot>
        <Slot $width={13} style={{ paddingLeft: 4 }}>
            <Icon w={1} h={40}>
                <path d="M.5 0v40" stroke="#59606c" />
            </Icon>
        </Slot>
    </Taskbar>
);

const App: React.FC = () => (
    <>
        <GlobalStyle />
        <Desktop>
            <EdgeTabs />
            <EdgeToolbar />
            <PageContent />
            <DesktopTaskbar />
            <Explorer />
            <PropertySheet />
            <ConfirmDialog />
        </Desktop>
    </>
);

export default App;
